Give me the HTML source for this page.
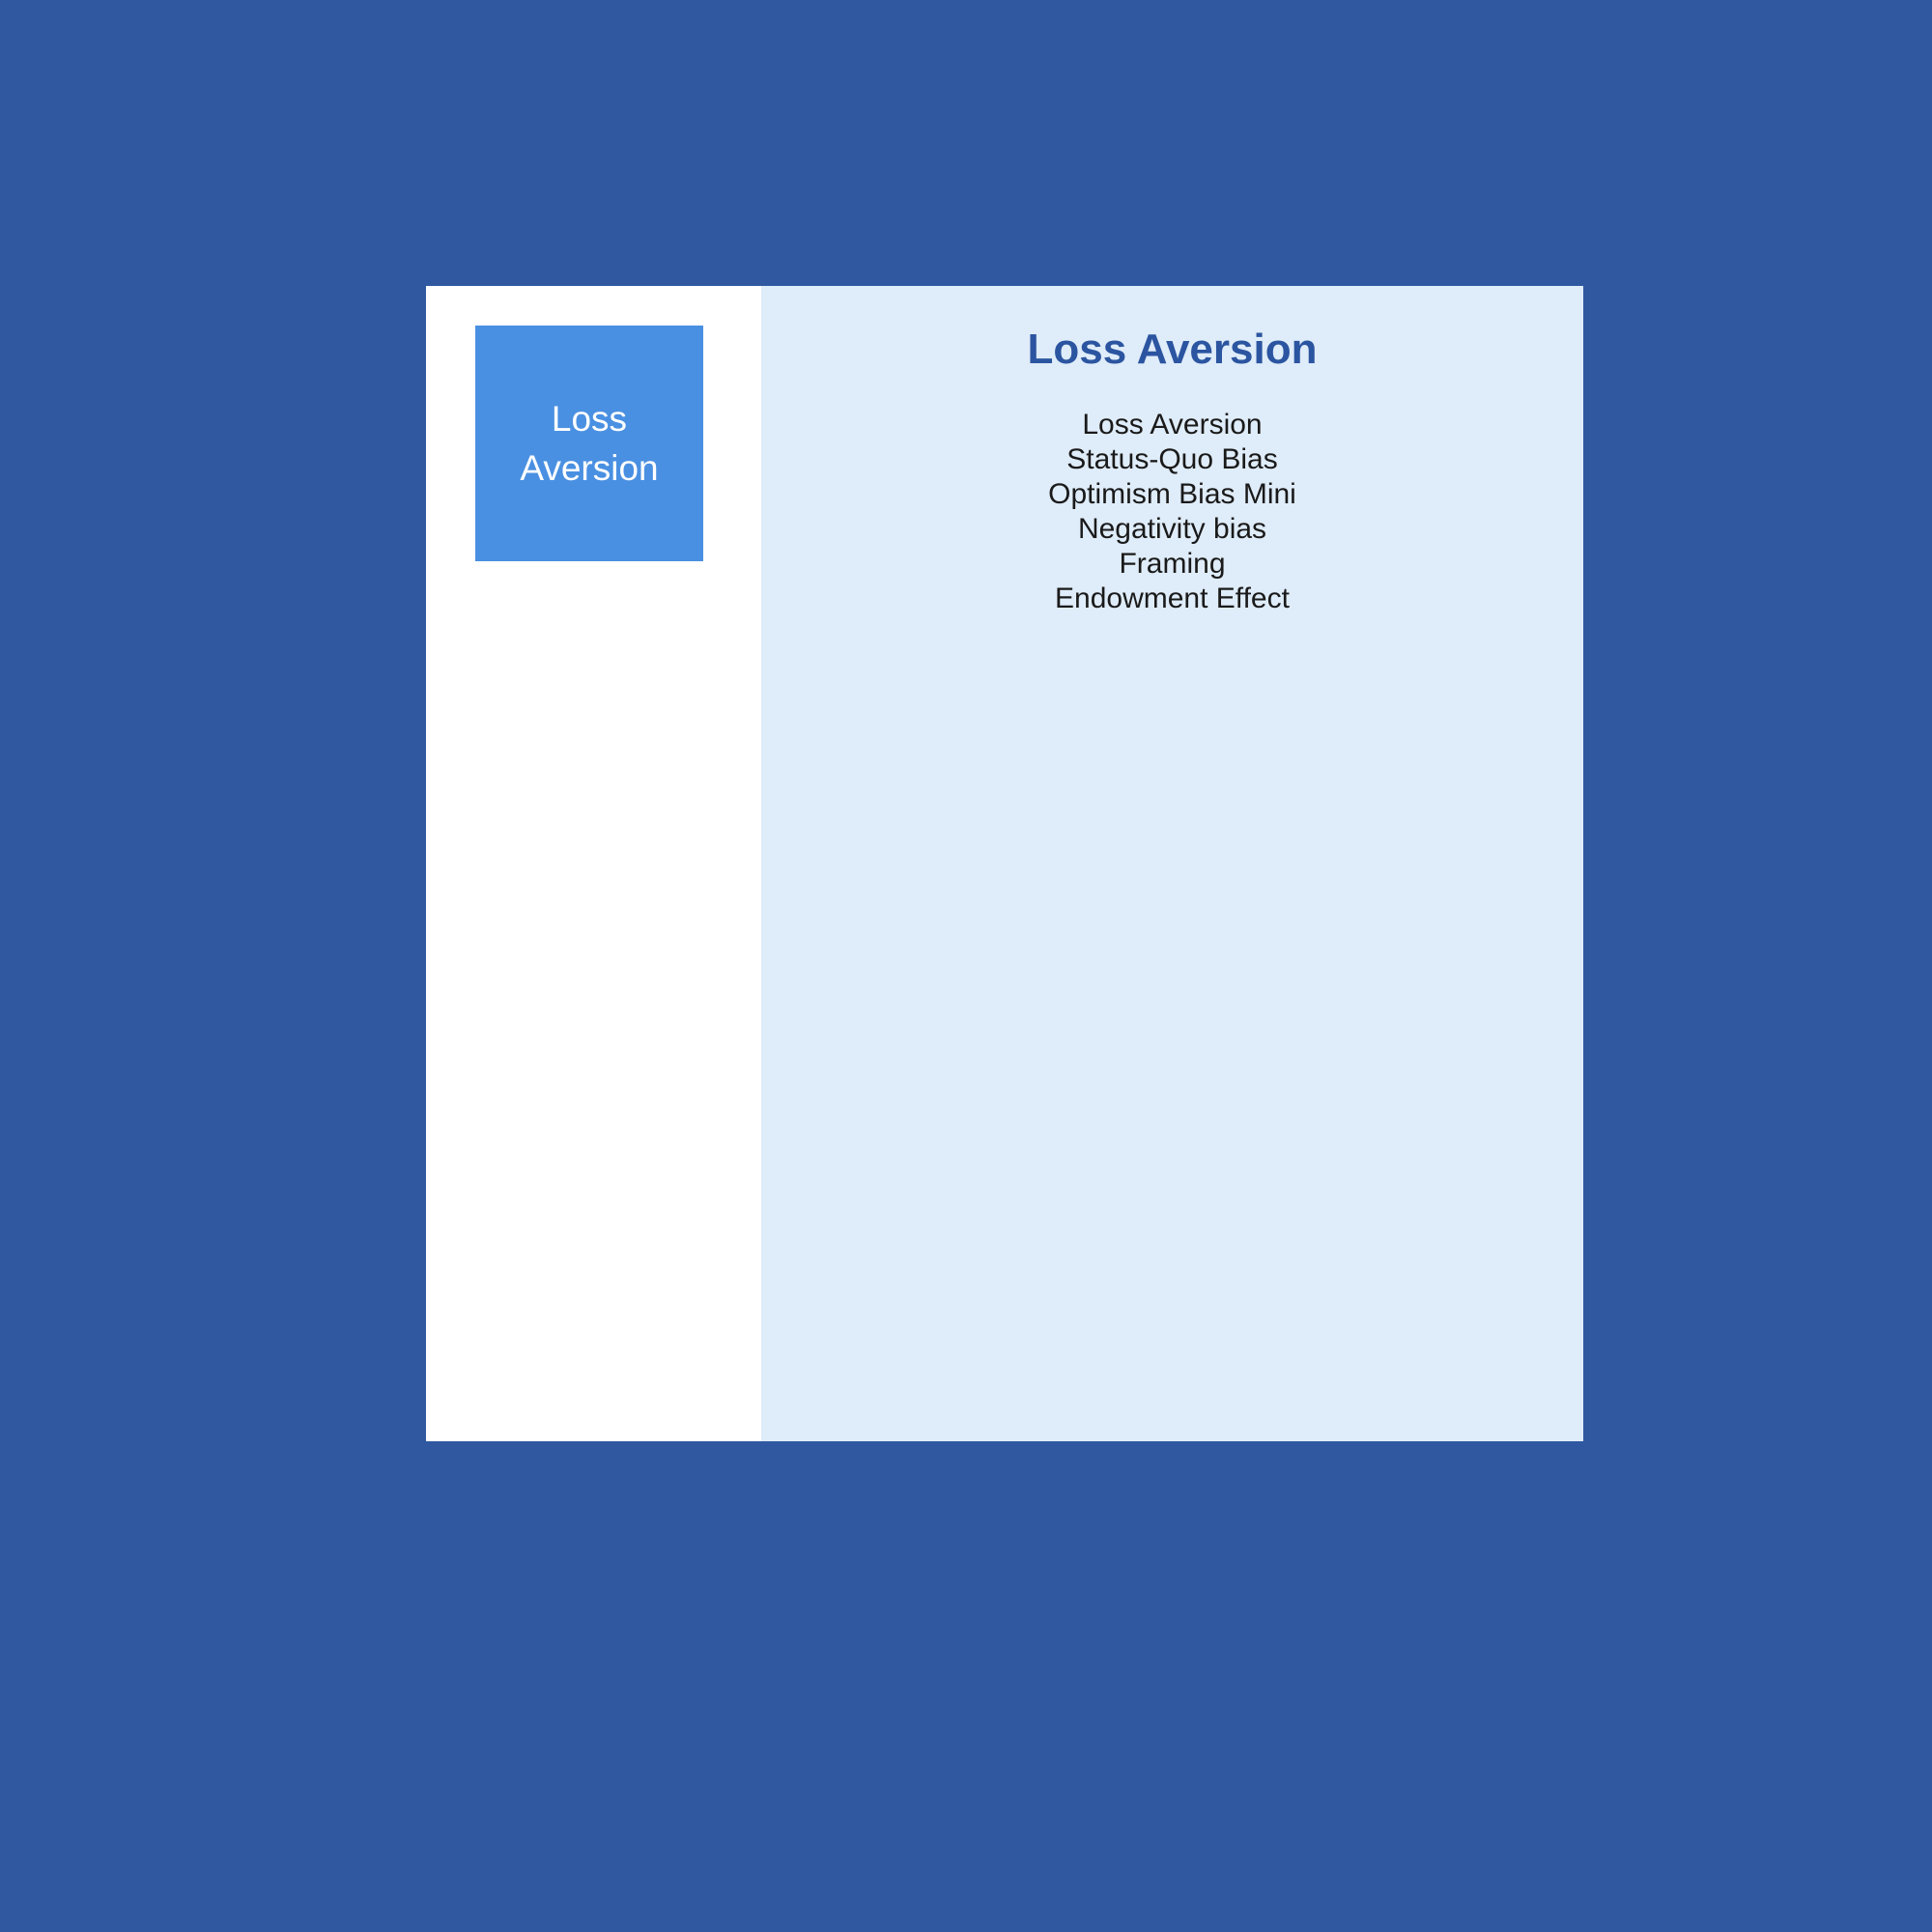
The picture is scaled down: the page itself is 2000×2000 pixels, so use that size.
<!DOCTYPE html>
<html><head><meta charset="utf-8"><style>
html,body{margin:0;padding:0;}
body{width:2000px;height:2000px;background:#2f58a0;position:relative;font-family:"Liberation Sans",sans-serif;overflow:hidden;}
.panel{position:absolute;left:441px;top:296px;width:1198px;height:1196px;background:#fff;}
.right{position:absolute;left:788px;top:296px;width:851px;height:1196px;background:#dfecf9;}
.box{position:absolute;left:492px;top:337px;width:236px;height:244px;background:#4a90e2;color:#fff;font-size:37px;line-height:51px;text-align:center;display:flex;align-items:center;justify-content:center;}
.title{position:absolute;left:788px;width:851px;top:336px;text-align:center;color:#2b55a0;font-weight:bold;font-size:44px;line-height:52px;}
.list{position:absolute;left:788px;width:851px;top:422px;text-align:center;color:#1a1a1a;font-size:30px;line-height:36px;}
</style></head><body>
<div class="panel"></div>
<div class="right"></div>
<div class="box"><div>Loss<br>Aversion</div></div>
<div class="title">Loss Aversion</div>
<div class="list">Loss Aversion<br>Status-Quo Bias<br>Optimism Bias Mini<br>Negativity bias<br>Framing<br>Endowment Effect</div>
</body></html>
